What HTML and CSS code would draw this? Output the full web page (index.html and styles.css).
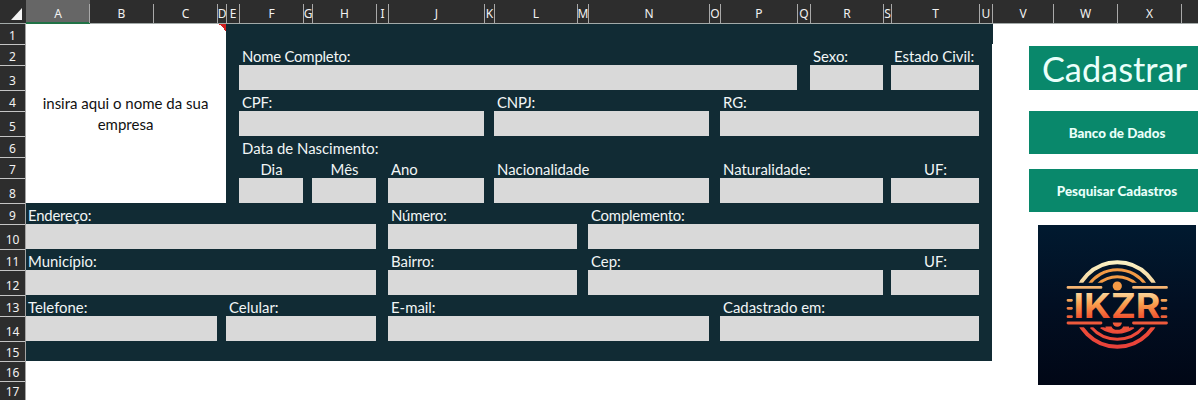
FILE: index.html
```html
<!DOCTYPE html>
<html lang="pt-BR">
<head>
    <meta charset="UTF-8">
    <title>Cadastro</title>
    <meta name="viewport" content="width=device-width, initial-scale=1.0">
    <link rel="stylesheet" href="styles.css">
</head>
<body>
    <div class="sheet">
        <!-- Column headers -->
        <div class="columns">
            <div class="corner"></div>
            <div class="col active">A</div>
            <div class="col">B</div>
            <div class="col">C</div>
            <div class="col">D</div>
            <div class="col">E</div>
            <div class="col">F</div>
            <div class="col">G</div>
            <div class="col">H</div>
            <div class="col">I</div>
            <div class="col">J</div>
            <div class="col">K</div>
            <div class="col">L</div>
            <div class="col">M</div>
            <div class="col">N</div>
            <div class="col">O</div>
            <div class="col">P</div>
            <div class="col">Q</div>
            <div class="col">R</div>
            <div class="col">S</div>
            <div class="col">T</div>
            <div class="col">U</div>
            <div class="col">V</div>
            <div class="col">W</div>
            <div class="col">X</div>
            <div class="col"></div>
        </div>

        <!-- Row headers -->
        <div class="rows">
            <div class="row">1</div>
            <div class="row">2</div>
            <div class="row tall">3</div>
            <div class="row">4</div>
            <div class="row tall">5</div>
            <div class="row">6</div>
            <div class="row">7</div>
            <div class="row tall">8</div>
            <div class="row">9</div>
            <div class="row tall">10</div>
            <div class="row">11</div>
            <div class="row tall">12</div>
            <div class="row">13</div>
            <div class="row tall">14</div>
            <div class="row">15</div>
            <div class="row">16</div>
            <div class="row">17</div>
        </div>

        <!-- Form -->
        <div class="form-back"></div>
        <div class="form-top"></div>
        <div class="company">insira aqui o nome da sua<br>empresa</div>

        <div class="label tight r2 f-p">Nome Completo:</div>
        <div class="label r2 r-r">Sexo:</div>
        <div class="label r2 t-t">Estado Civil:</div>
        <div class="field r3 f-p"></div>
        <div class="field r3 r-r"></div>
        <div class="field r3 t-t"></div>

        <div class="label tight r4 f-j">CPF:</div>
        <div class="label tight r4 l-n">CNPJ:</div>
        <div class="label r4 p-t">RG:</div>
        <div class="field r5 f-j"></div>
        <div class="field r5 l-n"></div>
        <div class="field r5 p-t"></div>

        <div class="label r6 f-j">Data de Nascimento:</div>
        <div class="label center r7 f-f">Dia</div>
        <div class="label center r7 h-h">Mês</div>
        <div class="label r7 j-j">Ano</div>
        <div class="label r7 l-n">Nacionalidade</div>
        <div class="label r7 p-r">Naturalidade:</div>
        <div class="label center r7 t-t">UF:</div>
        <div class="field r8 f-f"></div>
        <div class="field r8 h-h"></div>
        <div class="field r8 j-j"></div>
        <div class="field r8 l-n"></div>
        <div class="field r8 p-r"></div>
        <div class="field r8 t-t"></div>

        <div class="label tight r9 a-h">Endereço:</div>
        <div class="label tight r9 j-l">Número:</div>
        <div class="label tight r9 n-t">Complemento:</div>
        <div class="field r10 a-h"></div>
        <div class="field r10 j-l"></div>
        <div class="field r10 n-t"></div>

        <div class="label r11 a-h">Município:</div>
        <div class="label r11 j-l">Bairro:</div>
        <div class="label r11 n-r">Cep:</div>
        <div class="label center r11 t-t">UF:</div>
        <div class="field r12 a-h"></div>
        <div class="field r12 j-l"></div>
        <div class="field r12 n-r"></div>
        <div class="field r12 t-t"></div>

        <div class="label r13 a-c">Telefone:</div>
        <div class="label r13 e-h">Celular:</div>
        <div class="label r13 j-n">E-mail:</div>
        <div class="label r13 p-t">Cadastrado em:</div>
        <div class="field r14 a-c"></div>
        <div class="field r14 e-h"></div>
        <div class="field r14 j-n"></div>
        <div class="field r14 p-t"></div>

        <!-- Buttons and logo -->
        <div class="side">
            <button class="btn btn-main">Cadastrar</button>
            <button class="btn btn-bank">Banco de Dados</button>
            <button class="btn btn-search">Pesquisar Cadastros</button>
            <svg class="logo" viewBox="0 0 158 160">
                <defs>
                    <linearGradient id="night" x1="0" y1="0" x2="0" y2="1">
                        <stop offset="0" stop-color="#011a30"/>
                        <stop offset="0.5" stop-color="#020f22"/>
                        <stop offset="1" stop-color="#010716"/>
                    </linearGradient>
                    <linearGradient id="sun" gradientUnits="userSpaceOnUse" x1="0" y1="35" x2="0" y2="124">
                        <stop offset="0" stop-color="#fbf3c8"/>
                        <stop offset="0.28" stop-color="#f5d39a"/>
                        <stop offset="0.5" stop-color="#f08a3c"/>
                        <stop offset="0.72" stop-color="#ee5038"/>
                        <stop offset="1" stop-color="#e8403a"/>
                    </linearGradient>
                    <linearGradient id="word" gradientUnits="userSpaceOnUse" x1="0" y1="67" x2="0" y2="93">
                        <stop offset="0" stop-color="#fbd9a0"/>
                        <stop offset="0.45" stop-color="#f9a04e"/>
                        <stop offset="1" stop-color="#f2512f"/>
                    </linearGradient>
                    <clipPath id="halves">
                        <rect x="0" y="0" width="158" height="57.7"/>
                        <rect x="0" y="102.3" width="158" height="58"/>
                    </clipPath>
                </defs>
                <rect width="158" height="160" fill="url(#night)"/>
                <g clip-path="url(#halves)" fill="none" stroke="url(#sun)">
                    <circle cx="79.3" cy="79.5" r="42.3" stroke-width="4"/>
                </g>
                <g clip-path="url(#halves)" fill="none" stroke="#f39a45" stroke-width="3">
                    <path d="M51 59.500A34.500 34.500 0 0 1 107.600 59.500M60.500 59A28 28 0 0 1 98 59"/>
                    <path d="M53 102A34.500 34.500 0 0 0 105.600 102M63 102A28 28 0 0 0 95.500 102" stroke="#ec4a3a"/>
                </g>
                <path d="M67.500 101.500h6a6 4.500 0 0 0 11.600 0h6v3q-11.800 6-23.600 0z" fill="#ee5039"/>
                <circle cx="79.3" cy="61" r="4.600" fill="#f59a45"/>
                <path d="M74.700 97.500h9.200a4.600 4.200 0 0 1-9.200 0z" fill="#ee5a3a"/>
                <g stroke-width="2.800" stroke-linecap="round">
                    <path d="M30 62.400H63M95.500 62.400H128.500" stroke="#f6b573"/>
                    <path d="M30 98H63M95.500 98H128.500" stroke="#ee5a3c"/>
                    <path d="M30 75.300H33.500M124 75.300H128" stroke="#f5a457"/>
                    <path d="M30 83.300H33.500M124 83.300H128" stroke="#f28245"/>
                    <path d="M30 91.700H33.500M124 91.700H128" stroke="#ee613a"/>
                </g>
                <text class="logo-text" x="35.500" y="92.500" textLength="87" lengthAdjust="spacingAndGlyphs" fill="url(#word)">IKZR</text>
            </svg>
        </div>
    </div>
</body>
</html>
```

FILE: styles.css
```css
body {
    margin: 0;
    background: #fff;
    font-family: 'Lato', sans-serif;
    overflow: hidden;
}
.sheet {
    display: grid;
    grid-template-columns: 26px 63px 64px 64px 9px 13px 64px 9px 64px 12px 96px 10px 83px 11px 121px 11px 77px 13px 73px 8px 88px 13px 61px 64px 64px 17px;
    grid-template-rows: 24px 20px 21px 25px 21px 25px 21px 21px 25px 21px 25px 21px 25px 21px 25px 20px 20px 19px;
    width: 1198px;
    height: 400px;
}

/* headers */
.columns {
    grid-area: 1 / 1 / 2 / -1;
    display: grid;
    grid-template-columns: subgrid;
    box-sizing: border-box;
    padding-top: 4px;
    background: #2d2d2d;
    border-bottom: 1px solid #a3aaa9;
}
.col {
    display: flex;
    justify-content: center;
    overflow: hidden;
    border-left: 1px solid #a9a9a9;
    color: #f2f2f2;
    font: 12px/19px 'Noto Sans', sans-serif;
}
.col.active {
    margin: -4px -1px -1px 0;
    padding-top: 4px;
    border-left: 0;
    border-bottom: 2px solid #217346;
    background: #666;
}
.corner {
    align-self: end;
    justify-self: end;
    margin: 0 4px 3px 0;
    border-left: 11px solid transparent;
    border-bottom: 12px solid #f4f4f4;
}
.rows {
    grid-area: 2 / 1 / -1 / 2;
    display: grid;
    grid-template-rows: subgrid;
    background: #2d2d2d;
    border-right: 1px solid #a3a3a3;
}
.row {
    display: flex;
    align-items: flex-end;
    justify-content: center;
    overflow: hidden;
    border-top: 1px solid #c4c4c4;
    color: #f2f2f2;
    font: 12px/17px 'Noto Sans', sans-serif;
}
.row.tall {
    padding-bottom: 1px;
}
.row:first-child {
    border-top: 0;
}

/* form */
.form-back {
    grid-area: 2 / 2 / 17 / 23;
    background: #112b34;
}
.form-top {
    grid-area: 2 / 22 / 3 / 23;
    margin-right: -1px;
    background: #112b34;
}
.company {
    grid-area: 2 / 2 / 10 / 6;
    display: flex;
    align-items: center;
    justify-content: center;
    padding-right: 1px;
    text-align: center;
    background: linear-gradient(to bottom left, #d01f1f 50%, transparent 50%) no-repeat top right / 7px 7px #fff;
    color: #111;
    font-size: 15px;
    line-height: 21px;
}
.label {
    padding-left: 3px;
    color: #f2f6f6;
    font-size: 14.9px;
    line-height: 25px;
    white-space: nowrap;
}
.label.tight {
    letter-spacing: -0.2px;
}
.label.center {
    padding-left: 1px;
    text-align: center;
}
.field {
    background: #d9d9d9;
}

.r2 { grid-row: 3; }
.r3 { grid-row: 4; }
.r4 { grid-row: 5; }
.r5 { grid-row: 6; }
.r6 { grid-row: 7; }
.r7 { grid-row: 8; }
.r8 { grid-row: 9; }
.r9 { grid-row: 10; }
.r10 { grid-row: 11; }
.r11 { grid-row: 12; }
.r12 { grid-row: 13; }
.r13 { grid-row: 14; }
.r14 { grid-row: 15; }

.a-c { grid-column: 2 / 5; }
.a-h { grid-column: 2 / 10; }
.e-h { grid-column: 6 / 10; }
.f-f { grid-column: 7 / 8; }
.f-j { grid-column: 7 / 12; }
.f-p { grid-column: 7 / 18; }
.h-h { grid-column: 9 / 10; }
.j-j { grid-column: 11 / 12; }
.j-l { grid-column: 11 / 14; }
.j-n { grid-column: 11 / 16; }
.l-n { grid-column: 13 / 16; }
.n-r { grid-column: 15 / 20; }
.n-t { grid-column: 15 / 22; }
.p-r { grid-column: 17 / 20; }
.p-t { grid-column: 17 / 22; }
.r-r { grid-column: 19 / 20; }
.t-t { grid-column: 21 / 22; }

.label.a-c,
.label.a-h {
    padding-left: 2px;
}

/* buttons */
.side {
    grid-area: 2 / 23 / -1 / -1;
    display: flex;
    flex-direction: column;
    padding: 22px 0 0 37px;
}
.btn {
    flex: none;
    height: 43px;
    padding: 0;
    border: none;
    background: #09886b;
    color: #eafffa;
    font: 900 13.4px 'Lato', sans-serif;
    white-space: nowrap;
}
.btn-main {
    height: 44px;
    margin-bottom: 21px;
    padding-left: 2px;
    font: 34.3px 'Lato', sans-serif;
}
.btn-bank {
    margin-bottom: 15px;
}
.btn-bank,
.btn-search {
    padding-left: 7px;
}
.logo {
    display: block;
    flex: none;
    width: 158px;
    height: 160px;
    margin: 13px 0 0 9px;
}
.logo-text {
    font: 700 34px 'Inter', sans-serif;
}
```
